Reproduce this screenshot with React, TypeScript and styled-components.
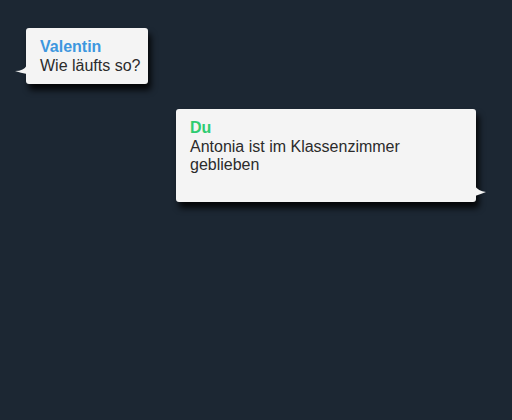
import React from "react";
import styled, { createGlobalStyle } from "styled-components";

const Global = createGlobalStyle`
  html, body { margin: 0; padding: 0; background: #1c2733; }
  #root { width: 512px; height: 420px; }
`;

const Screen = styled.div`
  width: 512px;
  height: 420px;
  background: #1c2733;
  box-sizing: border-box;
  padding: 28px 36px 0 26px;
  display: flex;
  flex-direction: column;
  gap: 25px;
  font-family: "Liberation Sans", Arial, sans-serif;
`;

const Row = styled.div<{ $mine?: boolean }>`
  display: flex;
  justify-content: ${(p) => (p.$mine ? "flex-end" : "flex-start")};
`;

const Bubble = styled.div<{ $mine?: boolean }>`
  position: relative;
  background: #f4f4f4;
  border-radius: 3px;
  box-shadow: 3px 6px 6px rgba(0, 0, 0, 0.85);
  padding: ${(p) => (p.$mine ? "8px 14px 28px 14px" : "8px 8px 9px 14px")};
  width: ${(p) => (p.$mine ? "272px" : "auto")};
`;

const Name = styled.div<{ $color: string }>`
  color: ${(p) => p.$color};
  font-weight: bold;
  font-size: 16px;
  line-height: 21px;
`;

const Text = styled.div`
  color: #2b2b2b;
  font-size: 16px;
  line-height: 18px;
`;

const Tail = styled.svg<{ $mine?: boolean }>`
  position: absolute;
  width: 12px;
  height: 10px;
  ${(p) => (p.$mine ? "right: -11px; bottom: 6px;" : "left: -11px; bottom: 9px;")}
`;

export default function App() {
  return (
    <>
      <Global />
      <Screen>
        <Row>
          <Bubble>
            <Tail viewBox="0 0 12 10">
              <path d="M12 0 Q9 6 0 6 Q6 8 12 9 Z" fill="#f4f4f4" />
            </Tail>
            <Name $color="#3d97df">Valentin</Name>
            <Text>Wie läufts so?</Text>
          </Bubble>
        </Row>
        <Row $mine>
          <Bubble $mine>
            <Tail $mine viewBox="0 0 12 10">
              <path d="M0 0 Q3 5 11 6 Q6 8 0 10 Z" fill="#f4f4f4" />
            </Tail>
            <Name $color="#2ecc71">Du</Name>
            <Text>Antonia ist im Klassenzimmer geblieben</Text>
          </Bubble>
        </Row>
      </Screen>
    </>
  );
}
